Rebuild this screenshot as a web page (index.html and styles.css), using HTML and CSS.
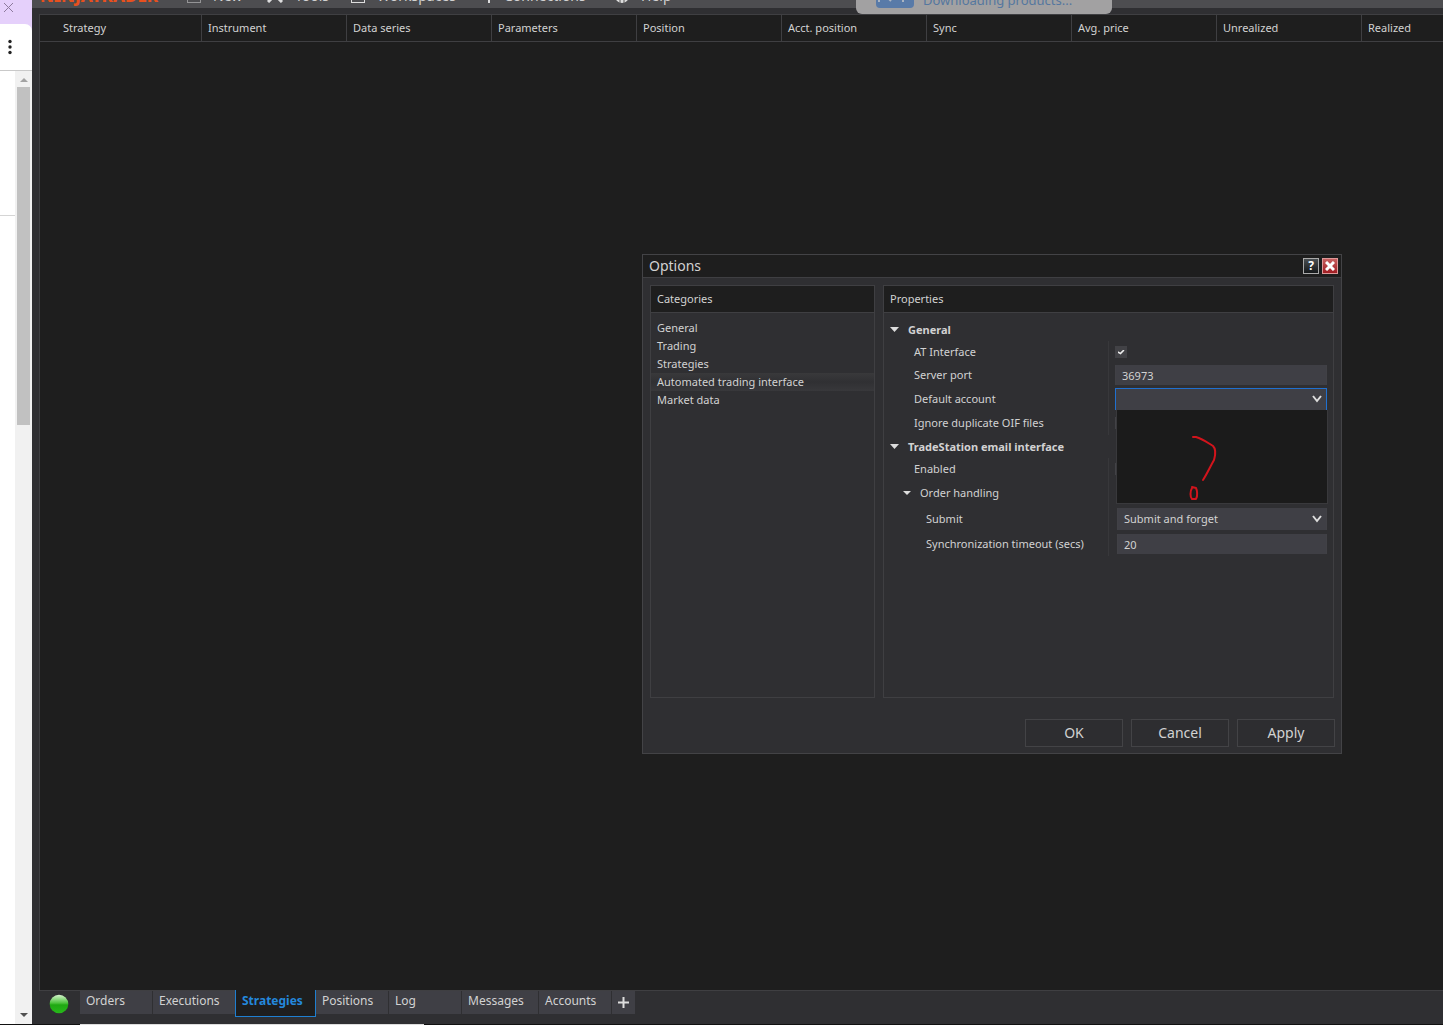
FILE: index.html
```html
<!DOCTYPE html>
<html lang="en">
<head>
<meta charset="utf-8">
<title>NinjaTrader - Options</title>
<link rel="stylesheet" href="styles.css">
</head>
<body>
<div class="desktop">
  <aside class="browser">
    <div class="browser-tabs">
      <button class="plain" aria-label="Close tab"><svg width="10" height="10" viewBox="0 0 10 10"><path d="M0 0 9 9M9 0 0 9" stroke="#8d7a9c" fill="none"/></svg></button>
    </div>
    <div class="browser-bar">
      <button class="plain" aria-label="Browser menu"><svg width="4" height="16" viewBox="0 0 4 16" fill="#222"><circle cx="2" cy="2.500" r="1.700"/><circle cx="2" cy="8" r="1.700"/><circle cx="2" cy="13.500" r="1.700"/></svg></button>
    </div>
    <div class="browser-page">
      <div class="page-content"><div class="page-block"></div></div>
      <div class="scrollbar">
        <svg width="8" height="4" viewBox="0 0 8 4"><path d="M0 4 4 0 8 4Z" fill="#a3a3a3"/></svg>
        <div class="scroll-thumb"></div>
        <svg width="8" height="4" viewBox="0 0 8 4"><path d="M0 0 4 4 8 0Z" fill="#505050"/></svg>
      </div>
    </div>
  </aside>

  <main class="app">
    <nav class="menubar">
      <span class="brand">NINJATRADER</span>
      <a href="#" class="menu-new"><svg width="14" height="14" viewBox="0 0 14 14"><rect x=".5" y=".5" width="13" height="13" fill="none" stroke="#ddd" stroke-dasharray="1 1"/></svg>New</a>
      <a href="#" class="menu-tools"><svg width="16" height="14" viewBox="0 0 16 14"><path d="M1 13 12 2M4 2l11 11" fill="none" stroke="#ddd" stroke-width="3"/></svg>Tools</a>
      <a href="#" class="menu-work"><svg width="14" height="14" viewBox="0 0 14 14"><rect x=".5" y=".5" width="13" height="13" fill="none" stroke="#ddd"/></svg>Workspaces</a>
      <a href="#" class="menu-conn"><svg width="6" height="14" viewBox="0 0 6 14"><path d="M3 0v14M0 3h6" fill="none" stroke="#ddd" stroke-width="2"/></svg>Connections</a>
      <a href="#" class="menu-help"><svg width="14" height="14" viewBox="0 0 14 14"><circle cx="7" cy="7" r="5" fill="none" stroke="#ddd" stroke-width="4"/><path d="M5 9v5M9 9v5" stroke="#555"/></svg>Help</a>
    </nav>
    <div class="toast" role="status"><svg width="38" height="22" viewBox="0 0 38 22"><rect width="38" height="22" rx="4" fill="#587aa8"/><path d="M3 13v3M12 12l3 3M27 13v3" stroke="#aab4c2" stroke-width="2"/></svg><span>Downloading products...</span></div>

    <section class="grid-pane">
      <table class="grid">
        <thead><tr><th class="first">Strategy</th><th>Instrument</th><th>Data series</th><th>Parameters</th><th>Position</th><th>Acct. position</th><th>Sync</th><th>Avg. price</th><th>Unrealized</th><th class="last">Realized</th></tr></thead>
      </table>
    </section>

    <footer class="tabs">
      <svg class="status" width="20" height="20" viewBox="0 0 20 20"><defs><linearGradient id="orb" x1="0" y1="0" x2="0" y2="1"><stop offset="0" stop-color="#d8f5d0"/><stop offset=".45" stop-color="#4cc23c"/><stop offset=".55" stop-color="#1fa812"/><stop offset="1" stop-color="#27b81a"/></linearGradient></defs><circle cx="10" cy="10" r="9.300" fill="url(#orb)"/></svg>
      <button class="tab">Orders</button>
      <button class="tab tab-wide">Executions</button>
      <button class="tab active">Strategies</button>
      <button class="tab">Positions</button>
      <button class="tab">Log</button>
      <button class="tab tab-mid">Messages</button>
      <button class="tab">Accounts</button>
      <button class="tab add" aria-label="Add tab"><svg width="11" height="11" viewBox="0 0 11 11"><path d="M5.500 0v11M0 5.500h11" stroke="#ddd" stroke-width="2"/></svg></button>
    </footer>
  </main>
  <div class="taskbar"><div class="taskbar-dark"></div><div class="taskbar-light"></div></div>

  <div class="dialog" role="dialog" aria-labelledby="dialog-title">
    <header class="titlebar">
      <h1 id="dialog-title">Options</h1>
      <button class="winbtn" aria-label="Help">?</button>
      <button class="winbtn close" aria-label="Close"><svg width="10" height="10" viewBox="0 0 10 10"><path d="M1 1 9 9M9 1 1 9" stroke="#fff" stroke-width="3"/></svg></button>
    </header>
    <div class="panels">
      <section class="panel categories">
        <h2>Categories</h2>
        <ul>
          <li><a href="#">General</a></li>
          <li><a href="#">Trading</a></li>
          <li><a href="#">Strategies</a></li>
          <li><a href="#" class="selected">Automated trading interface</a></li>
          <li><a href="#">Market data</a></li>
        </ul>
      </section>
      <section class="panel properties">
        <h2>Properties</h2>
        <div class="props">
          <h3><svg width="9" height="5" viewBox="0 0 9 5"><path d="M0 0h9L4.500 5Z" fill="#ddd"/></svg>General</h3>
          <div class="fields">
            <div class="row"><label for="at">AT Interface</label><div class="value"><input type="checkbox" id="at" checked></div></div>
            <div class="row"><label for="port">Server port</label><div class="value"><input type="text" id="port" value="36973"></div></div>
            <div class="row"><label for="account">Default account</label>
              <div class="value combo open">
                <select id="account"><option></option></select>
                <svg class="chevron" width="10" height="8" viewBox="0 0 10 8"><path d="M1 1l4 5 4-5" fill="none" stroke="#ddd" stroke-width="2"/></svg>
                <div class="popup"><svg width="30" height="68" viewBox="0 0 30 68" fill="none" stroke="#d2141c" stroke-width="2" stroke-linecap="round" stroke-linejoin="round"><path d="M5 1h3c7 2 12 6 17 9 4 4 2 10 1 14-4 7-7 14-11 20M4 52c-2 3-2 9 0 11h4c2-3 1-9 0-11l-4-1"/></svg></div>
              </div>
            </div>
            <div class="row"><label for="duplicates">Ignore duplicate OIF files</label><div class="value"><input type="checkbox" id="duplicates"></div></div>
          </div>
          <h3><svg width="9" height="5" viewBox="0 0 9 5"><path d="M0 0h9L4.500 5Z" fill="#ddd"/></svg>TradeStation email interface</h3>
          <div class="fields">
            <div class="row"><label for="enabled">Enabled</label><div class="value"><input type="checkbox" id="enabled"></div></div>
            <div class="row tall sub"><h4><svg width="8" height="4" viewBox="0 0 8 4"><path d="M0 0h8L4 4Z" fill="#ddd"/></svg>Order handling</h4></div>
            <div class="row tall nested"><label for="submit">Submit</label>
              <div class="value combo"><select id="submit"><option>Submit and forget</option></select>
                <svg class="chevron" width="10" height="8" viewBox="0 0 10 8"><path d="M1 1l4 5 4-5" fill="none" stroke="#ddd" stroke-width="2"/></svg></div>
            </div>
            <div class="row nested"><label for="timeout">Synchronization timeout (secs)</label><div class="value"><input type="text" id="timeout" value="20"></div></div>
          </div>
        </div>
      </section>
    </div>
    <div class="actions"><button>OK</button><button>Cancel</button><button>Apply</button></div>
  </div>
</div>
</body>
</html>
```
FILE: styles.css
```css
* { box-sizing: border-box; }
body {
  margin: 0;
  font: 11px/18px "Noto Sans", "Open Sans", sans-serif;
  color: #d2d2d2;
}
h1, h2, h3, h4, ul { margin: 0; padding: 0; font: inherit; }
ul { list-style: none; }
a { color: inherit; text-decoration: none; }
button, input, select { font: inherit; color: inherit; margin: 0; }
svg { display: block; flex: none; }

.desktop {
  position: relative;
  display: grid;
  grid-template: minmax(0, 1fr) 1px / 32px minmax(0, 1fr);
  height: 100vh;
  overflow: hidden;
  background: #2f2f32;
}

/* Sliver of the browser window on the left */
.browser { display: flex; flex-direction: column; background: #e5d0fb; }
.plain { border: 0; padding: 0; background: none; }
.browser-tabs { height: 24px; padding-left: 4px; }
.browser-bar {
  height: 47px;
  padding: 15px 0 0 8px;
  background: #fff;
  border-bottom: 1px solid #c9c9c9;
  border-top-right-radius: 7px;
}
.browser-page { flex: 1; display: flex; background: #fff; }
.page-content { flex: 1; }
.page-block { height: 145px; border-bottom: 1px solid #d5d5d5; }
.scrollbar {
  width: 17px;
  padding: 7px 0;
  display: flex;
  flex-direction: column;
  align-items: center;
  background: #f1f1f1;
}
.scroll-thumb { width: 13px; height: 338px; margin: 5px 0 auto; background: #c1c1c1; }

/* Main application window */
.app { position: relative; display: flex; flex-direction: column; background: #2f2f32; }
.menubar {
  height: 8px;
  margin-bottom: 6px;
  padding: 0 0 2px 8px;
  display: flex;
  align-items: flex-end;
  overflow: hidden;
  background: #4d4d50;
  font-size: 14px;
  line-height: 20px;
}
.brand { width: 147px; color: #e8501e; font-weight: 800; font-size: 17px; }
.menubar a { display: flex; gap: 12px; align-items: center; }
.menu-new { width: 80px; }
.menu-tools { width: 84px; }
.menu-work { width: 135px; }
.menu-conn { width: 129px; }
.toast {
  position: absolute;
  left: 824px;
  top: -20px;
  width: 256px;
  height: 34px;
  padding: 0 20px 4px;
  display: flex;
  gap: 9px;
  align-items: flex-end;
  border-radius: 6px;
  background: #a2a1a2;
  color: #55779f;
  font-size: 13px;
  line-height: 20px;
}
.toast svg { margin-bottom: 2px; }
.grid-pane {
  flex: 1;
  margin-left: 7px;
  border: 1px solid #3f3f42;
  border-right: 0;
  background: #1e1e1e;
}
.grid { width: 100%; table-layout: fixed; border-spacing: 0; }
.grid th {
  width: 145px;
  height: 27px;
  padding: 0 6px;
  border-right: 1px solid #3f3f42;
  border-bottom: 1px solid #3f3f42;
  font-weight: 400;
  text-align: left;
  white-space: nowrap;
}
.grid .first { width: 162px; padding-left: 23px; }
.grid .last { width: auto; border-right: 0; }

.tabs { height: 33px; padding-left: 17px; display: flex; align-items: flex-start; font-size: 12px; }
.status { margin: 3px 11px 0 0; }
.tab {
  width: 72px;
  height: 23px;
  margin-right: 1px;
  padding: 0 6px 3px;
  border: 0;
  background: #3f3f45;
  text-align: left;
  line-height: 20px;
}
.tab-wide { width: 82px; }
.tab-mid { width: 76px; }
.tab.active {
  width: 81px;
  height: 27px;
  margin: -1px 0 0 -1px;
  padding-bottom: 5px;
  border: 1px solid #1f7fd0;
  border-top: 0;
  background: #1e1e1e;
  color: #2488dc;
  font-weight: 700;
}
.tab.add { width: 23px; padding-bottom: 0; }

.taskbar { grid-column: 1 / -1; display: flex; background: #111; }
.taskbar-dark { width: 80px; }
.taskbar-light { width: 344px; background: #ddd; }

/* Options window */
.dialog {
  position: absolute;
  left: 642px;
  top: 254px;
  width: 700px;
  border: 1px solid #434346;
  background: #2f2f32;
}
.titlebar {
  height: 23px;
  padding: 0 3px 0 6px;
  display: flex;
  align-items: center;
  gap: 3px;
  background: #1e1e1e;
  border-bottom: 1px solid #3f3f42;
}
.titlebar h1 { flex: 1; font-size: 14px; }
.winbtn {
  width: 16px;
  height: 16px;
  padding: 0;
  display: grid;
  place-items: center;
  border: 1px solid #aaa;
  background: linear-gradient(#4a4f52, #15181a);
  color: #fff;
  font-size: 12px;
  font-weight: 700;
  line-height: 14px;
}
.winbtn.close { border-color: #d99; background: linear-gradient(#c86060, #a01c22); }
.panels { display: flex; gap: 8px; padding: 7px 7px 0; }
.panel { height: 413px; border: 1px solid #3f3f42; }
.categories { width: 225px; }
.properties { flex: 1; }
.panel h2 {
  height: 27px;
  padding: 0 6px;
  background: #1e1e1e;
  border-bottom: 1px solid #3f3f42;
  line-height: 26px;
}
.categories ul { padding-top: 6px; }
.categories a { display: block; padding: 0 6px; }
.categories .selected { background: linear-gradient(#39393b, #303033 50%, #38383b); }

.props { padding: 5px 6px 0; }
.props h3 { height: 23px; display: flex; align-items: center; gap: 9px; font-weight: 700; }
.props h4 { display: flex; align-items: center; gap: 9px; }
.fields { padding-left: 24px; }
.row { height: 24px; display: grid; grid-template-columns: 195px 212px; align-items: center; }
.row:first-child { height: 22px; }
.row > :first-child { height: 100%; display: flex; align-items: center; border-right: 1px solid #38383b; }
.row.tall { height: 26px; }
.row.sub { margin-left: -11px; grid-template-columns: 206px 212px; }
.row.nested { margin-left: 12px; grid-template-columns: 183px 212px; }
.value { margin-left: 6px; width: 212px; }
.nested .value { margin-left: 8px; width: 210px; }
input[type="text"], select {
  display: block;
  width: 100%;
  height: 20px;
  padding: 0 6px;
  border: 1px solid #414146;
  border-width: 0 1px;
  border-radius: 0;
  background: #3f3f45;
}
select { height: 22px; appearance: none; }
input[type="checkbox"] {
  display: grid;
  place-items: center;
  appearance: none;
  width: 12px;
  height: 12px;
  background: #424246;
}
input[type="checkbox"]:checked::before {
  content: "";
  width: 7px;
  height: 5px;
  background: #eee;
  clip-path: polygon(0 30%, 40% 60%, 85% 0, 100% 20%, 45% 100%, 0 65%);
}
.combo { position: relative; }
.chevron { position: absolute; right: 5px; top: 7px; pointer-events: none; }
.open select { border: 1px solid #2070d0; border-bottom: 0; }
.popup {
  position: absolute;
  z-index: 1;
  top: 22px;
  left: 1px;
  width: 212px;
  height: 94px;
  padding: 26px 0 0 71px;
  border: 1px solid #39393c;
  border-top: 0;
  background: #1b1b1b;
}
.actions { display: flex; justify-content: flex-end; gap: 8px; padding: 21px 6px 6px; }
.actions button {
  width: 98px;
  height: 28px;
  padding: 0;
  border: 1px solid #434346;
  background: #2d2d30;
  font-size: 14px;
}
```
